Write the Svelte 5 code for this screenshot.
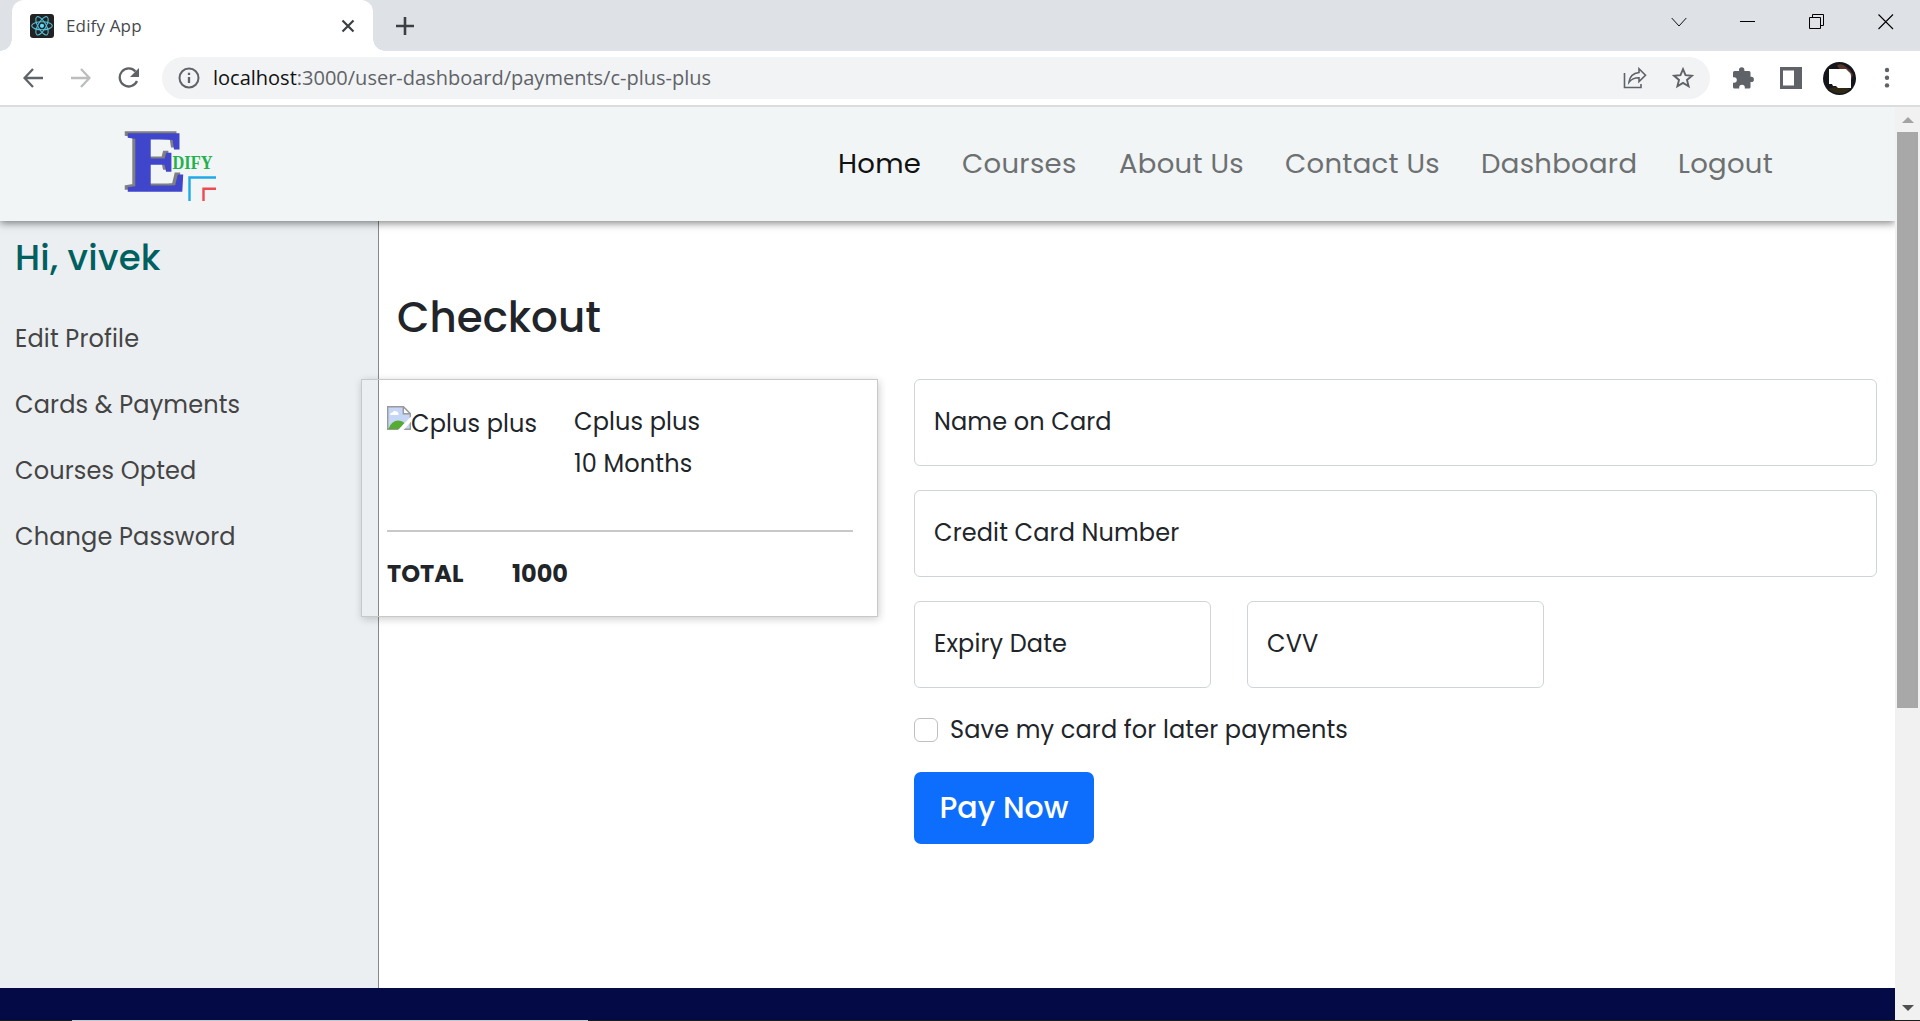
<script>
  const nav = ['Home', 'Courses', 'About Us', 'Contact Us', 'Dashboard', 'Logout'];
  const menu = ['Edit Profile', 'Cards & Payments', 'Courses Opted', 'Change Password'];
  let save = $state(false);
</script>

<div class="window">
  <div class="tabs">
    <div class="tab">
      <svg class="favicon" width="24" height="24" viewBox="0 0 24 24">
        <rect width="24" height="24" rx="3" fill="#222" />
        <g fill="none" stroke="#53c1de" stroke-width="1.1">
          <ellipse cx="12" cy="11.8" rx="10.3" ry="4" />
          <ellipse cx="12" cy="11.8" rx="10.3" ry="4" transform="rotate(60 12 11.8)" />
          <ellipse cx="12" cy="11.8" rx="10.3" ry="4" transform="rotate(120 12 11.8)" />
        </g>
        <circle cx="12" cy="11.8" r="2.1" fill="#61dafb" />
      </svg>
      <span class="tab-title">Edify App</span>
      <svg class="tab-close" width="14" height="14" viewBox="0 0 14 14"><path d="M1.5 1.5l11 11M12.5 1.5l-11 11" stroke="#3c4043" stroke-width="2.2" /></svg>
    </div>
    <svg class="plus" width="18" height="18" viewBox="0 0 18 18"><path d="M9 0v18M0 9h18" stroke="#3c4043" stroke-width="2.6" /></svg>
    <div class="controls">
      <svg width="16" height="16" viewBox="0 0 16 16"><path d="M.7 4L8 12l7.300-8" fill="none" stroke="#111" stroke-width="1" /></svg>
      <svg width="16" height="16" viewBox="0 0 16 16"><path d="M0 7.500h15" stroke="#000" /></svg>
      <svg width="16" height="16" viewBox="0 0 16 16"><path d="M.5 3.500h11v11H.5zM3.500 3.500v-3h11v11h-3" fill="none" stroke="#000" /></svg>
      <svg width="16" height="16" viewBox="0 0 16 16"><path d="M.5.5l14.500 14.500M15 .5L.5 15" stroke="#000" stroke-width="1.100" /></svg>
    </div>
  </div>

  <div class="toolbar">
    <div class="history">
      <svg width="20" height="20" viewBox="0 0 20 20"><path d="M20 10H1.500M10 1L1.500 10l8.500 9" fill="none" stroke="#5f6368" stroke-width="2.300" /></svg>
      <svg width="20" height="20" viewBox="0 0 20 20"><path d="M0 10h18.500M10 1l8.500 9-8.500 9" fill="none" stroke="#bbbdbf" stroke-width="2.300" /></svg>
      <svg width="22" height="22" viewBox="0 0 22 22"><path d="M17.500 4.500A9 9 0 1 0 19 14" fill="none" stroke="#5f6368" stroke-width="2.300" /><path d="M21 1v9h-9z" fill="#5f6368" /></svg>
    </div>
    <div class="address">
      <svg width="22" height="22" viewBox="0 0 22 22"><circle cx="11" cy="11" r="9.500" fill="none" stroke="#5f6368" stroke-width="2" /><path d="M11 10v6M11 5.800v2.200" stroke="#5f6368" stroke-width="2.300" /></svg>
      <span class="url"><b>localhost</b>:3000/user-dashboard/payments/c-plus-plus</span>
      <svg class="share" width="24" height="22" viewBox="0 0 24 22"><path d="M1.500 6v14.500h16.500V17" fill="none" stroke="#5f6368" stroke-width="1.600" /><path d="M16 1.700l6.500 6.500L16 14.500v-3.700c-4.500-.1-7.500 1.200-10 4.400.6-5 4-9 10-9.700z" fill="none" stroke="#5f6368" stroke-width="1.600" /></svg>
      <svg class="star" width="22" height="22" viewBox="0 0 22 22"><path d="M11 2.200l2.500 6 6.500.5-5 4.200 1.600 6.400L11 15.900l-5.600 3.400L7 12.900 2 8.700l6.500-.5z" fill="none" stroke="#5f6368" stroke-width="1.900" /></svg>
    </div>
    <div class="actions">
      <svg width="22" height="22" viewBox="0 0 22 22"><path d="M1 5.500Q1 4 2.500 4H7V3a2.700 2.700 0 0 1 5.400 0v1H17q1.500 0 1.500 1.500v4.300h.8a2.600 2.600 0 0 1 0 5.200h-.8v5q0 1.500-1.500 1.500h-4.200v-1a2.800 2.800 0 0 0-5.600 0v1H2.500Q1 21.500 1 20v-4.200h1a2.800 2.800 0 0 0 0-5.600H1z" fill="#5f6368" /></svg>
      <svg width="22" height="22" viewBox="0 0 22 22"><path fill-rule="evenodd" d="M0 0h22v22H0zM3 3.500v15h11v-15z" fill="#5f6368" /></svg>
      <svg width="33" height="33" viewBox="0 0 33 33"><circle cx="16.500" cy="16.500" r="16.500" fill="#15161c" /><path d="M14 3.500q5-3 9 1.500l4 3 3 5-2 5-10-9z" fill="#57372c" /><path d="M5 27q10-5 22 0-9 9-22 0z" fill="#2f2815" /><path d="M6 7h17l3 3q2 1 2 4v12H15l-2-2h-3l-1-2H6z" fill="#fff" /></svg>
      <svg width="6" height="22" viewBox="0 0 6 22"><g fill="#5f6368"><circle cx="3" cy="3" r="2.200" /><circle cx="3" cy="10.700" r="2.200" /><circle cx="3" cy="18.400" r="2.200" /></g></svg>
    </div>
  </div>

  <div class="viewport">
    <div class="page">
      <header>
        <svg class="logo" width="96" height="102" viewBox="122 110 96 102">
          <g font-family="Liberation Serif, serif" font-weight="700">
            <text class="initial" x="127" y="191" font-size="86" textLength="60" lengthAdjust="spacingAndGlyphs">E</text>
            <text x="172.500" y="168.700" font-size="18.500" fill="#22b14c" textLength="40" lengthAdjust="spacingAndGlyphs">DIFY</text>
          </g>
          <path d="M189.500 201v-23.500H216" fill="none" stroke="#1fa9e8" stroke-width="2.400" />
          <path d="M203.500 201v-12.300H216" fill="none" stroke="#ee4a52" stroke-width="2.400" />
        </svg>
        <nav>
          {#each nav as item, i}
            <a class:active={i === 0} href="#{item}">{item}</a>
          {/each}
        </nav>
      </header>

      <div class="body">
        <aside>
          <h2>Hi, vivek</h2>
          {#each menu as item}
            <a href="#{item}">{item}</a>
          {/each}
        </aside>
        <main>
          <h1>Checkout</h1>
          <div class="checkout">
            <section class="summary">
              <div class="course">
                <div class="thumb">
                  <svg width="24" height="24" viewBox="0 0 24 24">
                    <path d="M.7.7h15.600l7 7v15.600H.7z" fill="#c6d6f6" stroke="#9a9a9a" stroke-width="1.400" />
                    <path d="M3 9q0-2.500 2.500-2.500Q7 3.500 9.500 5.500q2 .3 2 3.500z" fill="#fff" />
                    <path d="M1.400 23q3-8.500 10-8.500 4 0 6 2.500L13 23z" fill="#56ab35" />
                    <path d="M24 10.500v5.300L16.500 24H11z" fill="#fff" />
                    <path d="M16.300.7v7h7z" fill="#fff" stroke="#9a9a9a" stroke-width="1.400" />
                  </svg><span>Cplus plus</span>
                </div>
                <div class="details"><p>Cplus plus</p><p>10 Months</p></div>
              </div>
              <div class="total"><span>TOTAL</span><span>1000</span></div>
            </section>
            <form>
              <div class="field">Name on Card</div>
              <div class="field">Credit Card Number</div>
              <div class="pair">
                <div class="field">Expiry Date</div>
                <div class="field">CVV</div>
              </div>
              <label><input type="checkbox" bind:checked={save} /><span>Save my card for later payments</span></label>
              <button type="button">Pay Now</button>
            </form>
          </div>
        </main>
      </div>
      <footer></footer>
    </div>
    <div class="scrollbar">
      <svg width="12" height="6" viewBox="0 0 12 6"><path d="M0 6l6-6 6 6z" fill="#a3a3a3" /></svg>
      <div class="thumb-bar"></div>
      <svg class="down" width="12" height="6" viewBox="0 0 12 6"><path d="M0 0h12L6 6z" fill="#505050" /></svg>
    </div>
  </div>
  <div class="taskbar"><i></i></div>
</div>

<style>
  :global(body) { margin: 0; overflow: hidden; }
  * { box-sizing: border-box; }
  svg { display: block; flex: none; }
  a { text-decoration: none; }
  h1, h2, p { margin: 0; font-weight: 500; }

  .window { width: 1920px; height: 1021px; display: flex; flex-direction: column; background: #fff; font-family: Poppins, Inter, sans-serif; color: #212529; }

  .tabs { flex: none; height: 51px; background: #dee1e6; display: flex; padding-left: 12px; }
  .tab { position: relative; width: 361px; height: 51px; background: #fff; border-radius: 12px 12px 0 0; display: flex; align-items: center; padding: 0 18px 0 18px; }
  .tab::before, .tab::after { content: ''; position: absolute; bottom: 0; width: 12px; height: 12px; }
  .tab::before { left: -12px; background: radial-gradient(circle at 0 0, transparent 11.500px, #fff 12px); }
  .tab::after { right: -12px; background: radial-gradient(circle at 100% 0, transparent 11.500px, #fff 12px); }
  .tab-title { margin-left: 12px; font: 17px/24px 'Open Sans', sans-serif; letter-spacing: 0.150px; color: #45494d; }
  .tab-close { margin-left: auto; }
  .plus { margin: 17px 0 0 23px; }
  .controls { margin: 14px 26px 0 auto; display: flex; gap: 53px; }

  .toolbar { flex: none; height: 56px; display: flex; align-items: center; border-bottom: 2px solid #dadce0; }
  .history { width: 162px; padding-left: 23px; display: flex; align-items: center; gap: 28px; }
  .history svg:last-child { margin-left: -1px; }
  .address { width: 1548px; height: 42px; border-radius: 21px; background: #f1f3f4; display: flex; align-items: center; padding: 0 16px 0 16px; }
  .url { margin-left: 13px; font: 20px/30px 'Open Sans', sans-serif; color: #5f6368; white-space: nowrap; }
  .url b { font-weight: 400; color: #111; }
  .share { margin-left: auto; }
  .star { margin-left: 25px; }
  .actions { display: flex; align-items: center; padding-left: 22px; }
  .actions svg:nth-child(2) { margin-left: 26px; }
  .actions svg:nth-child(3) { margin-left: 21px; }
  .actions svg:nth-child(4) { margin-left: 28px; }

  .viewport { flex: 1; min-height: 0; display: flex; }
  .page { width: 1895px; display: flex; flex-direction: column; overflow: hidden; }
  header { position: relative; z-index: 1; flex: none; height: 114px; background: #f1f5f6; box-shadow: 0 2px 8px rgba(0, 0, 0, 0.500); display: flex; padding-left: 122px; }
  .logo { margin-top: 3px; }
  .initial { fill: #4046cc; stroke: #4046cc; stroke-width: 1.500px; filter: drop-shadow(-3px -2px 0 #808080); }
  nav { margin-left: 620px; display: grid; grid-template-columns: 124px 157px 166px 196px 197px 110px; font-size: 27.500px; line-height: 113px; letter-spacing: 0.300px; white-space: nowrap; }
  nav a { color: #6d7071; }
  nav a.active { color: #111; }

  .body { flex: 1; display: flex; min-height: 0; }
  aside { width: 379px; flex: none; background: #ebeff2; border-right: 1px solid #85898c; padding: 15px 0 0 15px; display: flex; flex-direction: column; }
  h2 { font-size: 35.500px; line-height: 44px; color: #006060; margin-bottom: 26px; letter-spacing: 0.250px; }
  aside a { font-size: 24px; line-height: 66px; letter-spacing: 0.150px; color: #444; }
  main { padding: 72px 0 0 18px; }
  h1 { font-size: 42px; line-height: 50px; margin-bottom: 36px; }
  .checkout { margin-left: -36px; display: grid; grid-template-columns: 517px 963px; column-gap: 36px; align-items: start; font-size: 24px; letter-spacing: 0.130px; }
  .summary { height: 238px; border: 1px solid #c8c8c8; box-shadow: 1px 2px 8px rgba(0, 0, 0, 0.200); padding: 20px 24px 0 25px; }
  .course { height: 132px; display: flex; border-bottom: 2px solid #c8c8c8; }
  .thumb { width: 187px; display: flex; align-items: flex-start; padding-top: 5px; line-height: 37px; white-space: nowrap; }
  .thumb svg { margin-top: 1px; }
  .details { padding-top: 1px; }
  .details p { line-height: 42px; font-weight: 400; }
  .total { display: flex; padding-top: 24px; line-height: 36px; font-weight: 700; letter-spacing: 0; }
  .total span:first-child { width: 125px; }

  form { display: flex; flex-direction: column; align-items: flex-start; gap: 24px; }
  .field { width: 963px; height: 87px; border: 1px solid #ced4da; border-radius: 6px; padding: 0 19px; line-height: 83px; }
  .pair { display: flex; gap: 36px; }
  .pair .field { width: 297px; }
  label { display: flex; align-items: center; height: 36px; }
  input { appearance: none; width: 24px; height: 24px; margin: 0; border: 1px solid #bfbfbf; border-radius: 6px; background: #fff; }
  label span { margin: -2px 0 0 12px; }
  button { width: 180px; height: 72px; border: 0; border-radius: 7px; background: #0d6efd; color: #fff; font: 500 30px/70px Poppins, Inter, sans-serif; padding: 0 0 1px; }
  footer { flex: none; height: 32px; background: #040a46; }

  .scrollbar { width: 25px; background: #f1f1f1; display: flex; flex-direction: column; align-items: center; padding: 10px 0 9px; }
  .thumb-bar { width: 21px; height: 576px; margin-top: 9px; background: #a8a8a8; }
  .down { margin-top: auto; }
  .taskbar { flex: none; height: 1px; background: #1c1c1c; padding-left: 72px; }
  .taskbar i { display: block; width: 516px; height: 1px; background: #c8c8c8; }
</style>
